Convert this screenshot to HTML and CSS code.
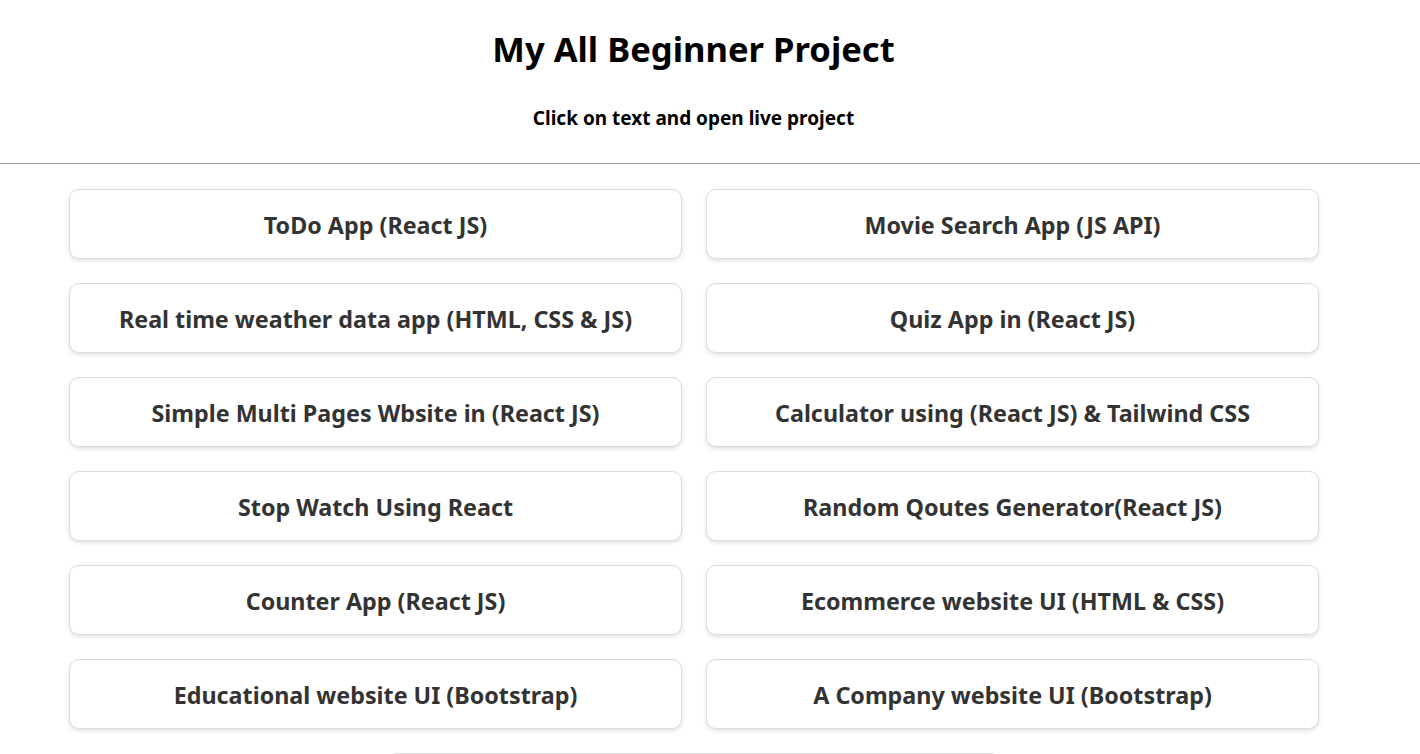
FILE: index.html
```html
<!DOCTYPE html>
<html lang="en">
<head>
<meta charset="UTF-8">
<title>My All Beginner Project</title>
<link rel="stylesheet" href="styles.css">
</head>
<body>
  <header class="header">
    <h1 class="title">My All Beginner Project</h1>
    <p class="subtitle">Click on text and open live project</p>
  </header>
  <hr class="divider">
  <main class="projects">
    <a class="card" href="#">ToDo App (React JS)</a>
    <a class="card" href="#">Movie Search App (JS API)</a>
    <a class="card" href="#">Real time weather data app (HTML, CSS &amp; JS)</a>
    <a class="card" href="#">Quiz App in (React JS)</a>
    <a class="card" href="#">Simple Multi Pages Wbsite in (React JS)</a>
    <a class="card" href="#">Calculator using (React JS) &amp; Tailwind CSS</a>
    <a class="card" href="#">Stop Watch Using React</a>
    <a class="card" href="#">Random Qoutes Generator(React JS)</a>
    <a class="card" href="#">Counter App (React JS)</a>
    <a class="card" href="#">Ecommerce website UI (HTML &amp; CSS)</a>
    <a class="card" href="#">Educational website UI (Bootstrap)</a>
    <a class="card" href="#">A Company website UI (Bootstrap)</a>
    <a class="card" href="#">Portfolio website UI (HTML &amp; CSS)</a>
  </main>
</body>
</html>
```
FILE: styles.css
```css
* { box-sizing: border-box; }
html, body { margin: 0; padding: 0; background: #fff; }
body {
  font-family: "Noto Sans", "Open Sans", sans-serif;
  color: #000;
}
.header {
  width: 1387px;
  text-align: center;
  padding-top: 25px;
}
.title {
  margin: 0;
  font-size: 34.6px;
  line-height: 48px;
  font-weight: 700;
}
.subtitle {
  margin: 33px 0 0;
  font-size: 19px;
  line-height: 24px;
  font-weight: 700;
}
.divider {
  margin: 33px 0 0;
  border: 0;
  border-top: 1px solid #999;
  height: 0;
}
.projects {
  display: flex;
  flex-wrap: wrap;
  justify-content: center;
  gap: 24px;
  width: 1250px;
  margin: 25px 0 0 69px;
  padding-bottom: 40px;
}
.card {
  display: flex;
  align-items: center;
  justify-content: center;
  width: 613px;
  height: 70px;
  padding-top: 2px;
  border: 1px solid #dcdcdc;
  border-radius: 10px;
  box-shadow: 0 2px 4px rgba(0,0,0,0.12);
  font-size: 23.3px;
  font-weight: 700;
  color: #333;
  text-decoration: none;
  background: #fff;
}
```
